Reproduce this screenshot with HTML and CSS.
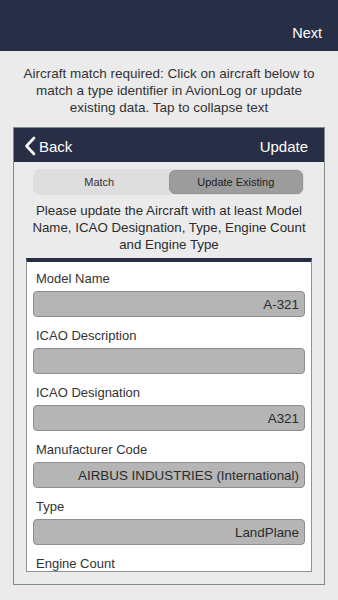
FILE: index.html
```html
<!DOCTYPE html>
<html lang="en">

<head>
    <meta charset="UTF-8">
    <title>Aircraft Match</title>
    <link rel="stylesheet" href="styles.css">
</head>

<body>
    <header class="top-bar">
        <span class="top-next">Next</span>
    </header>

    <p class="intro">Aircraft match required: Click on aircraft below to match a type identifier in AvionLog or update existing data. Tap to collapse text</p>

    <section class="panel">
        <div class="panel-head">
            <span class="back">
                <svg width="12" height="20" viewBox="0 0 12 20">
                    <polyline points="10,2 2.5,10 10,18" fill="none" stroke="#fff" stroke-width="2.6" stroke-linecap="round" stroke-linejoin="round" />
                </svg>
                Back
            </span>
            <span class="panel-action">Update</span>
        </div>

        <div class="segment">
            <div class="segment-item">Match</div>
            <div class="segment-item active">Update Existing</div>
        </div>

        <p class="hint">Please update the Aircraft with at least Model Name, ICAO Designation, Type, Engine Count and Engine Type</p>

        <div class="card">
            <div class="field">
                <label>Model Name</label>
                <div class="input">A-321</div>
            </div>
            <div class="field">
                <label>ICAO Description</label>
                <div class="input"></div>
            </div>
            <div class="field">
                <label>ICAO Designation</label>
                <div class="input">A321</div>
            </div>
            <div class="field">
                <label>Manufacturer Code</label>
                <div class="input">AIRBUS INDUSTRIES (International)</div>
            </div>
            <div class="field">
                <label>Type</label>
                <div class="input">LandPlane</div>
            </div>
            <div class="field">
                <label>Engine Count</label>
                <div class="input"></div>
            </div>
        </div>
    </section>
</body>

</html>
```
FILE: styles.css
```css
body {
    font-family: "Liberation Sans", Arial, sans-serif;
    background: #ebebeb;
    color: #2b2b2b;
    margin: 0;
    padding: 0;
    height: 600px;
    overflow: hidden;
}

.top-bar {
    height: 51px;
    background: #272e45;
    display: flex;
    justify-content: flex-end;
    align-items: flex-end;
    padding: 0 16px 10px 0;
    box-sizing: border-box;
}

.top-next {
    color: #fff;
    font-size: 14.5px;
}

.intro {
    margin: 0;
    padding: 14px 12px 0;
    font-size: 13.5px;
    line-height: 17px;
    text-align: center;
    color: #333;
}

.panel {
    margin: 11px 13px 0;
    height: 458px;
    box-sizing: border-box;
    border: 1px solid #7e8d86;
    display: flex;
    flex-direction: column;
}

.panel-head {
    height: 34px;
    flex: none;
    background: #272e45;
    color: #fff;
    font-size: 15px;
    display: flex;
    justify-content: space-between;
    align-items: center;
    padding: 2px 16px 0 10px;
    box-sizing: border-box;
}

.back {
    display: flex;
    align-items: center;
    gap: 3px;
}

.segment {
    margin: 7px 20px 0 19px;
    height: 26px;
    flex: none;
    display: flex;
    background: #dedede;
    border-radius: 6px;
}

.segment-item {
    flex: 1;
    display: flex;
    align-items: center;
    justify-content: center;
    font-size: 11px;
    color: #333;
}

.segment-item.active {
    background: #9c9c9c;
    border: 1px solid #939393;
    border-radius: 6px;
    margin: 1px 1px 1px 3px;
    color: #222;
}

.hint {
    margin: 7px 0 0;
    padding: 0 12px;
    font-size: 13.3px;
    line-height: 17px;
    text-align: center;
    flex: none;
}

.card {
    margin: 5px 12px 12px;
    flex: 1;
    overflow: hidden;
    background: #fff;
    border: 1px solid #8a9791;
    border-top: 4px solid #272e45;
    padding-top: 8px;
}

.field {
    margin-bottom: 10px;
}

.field label {
    display: block;
    padding-left: 9px;
    font-size: 13px;
    line-height: 17px;
    color: #333;
}

.input {
    margin: 4px 6px 0;
    height: 26px;
    box-sizing: border-box;
    background: #b5b5b5;
    border: 1px solid #8e8e8e;
    border-radius: 4px;
    font-size: 13.4px;
    text-align: right;
    padding: 0 5px;
    line-height: 25px;
    color: #2b2b2b;
}
```
